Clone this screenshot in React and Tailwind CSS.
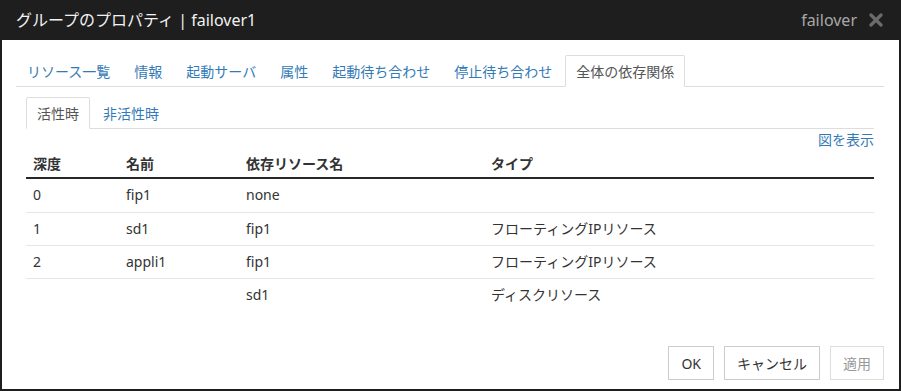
import React from "react";

const font = { fontFamily: '"Segoe UI", "Noto Sans", "Noto Sans CJK JP", sans-serif' };

const tabs = ["リソース一覧", "情報", "起動サーバ", "属性", "起動待ち合わせ", "停止待ち合わせ", "全体の依存関係"];

const rows = [
  ["0", "fip1", "none", ""],
  ["1", "sd1", "fip1", "フローティングIPリソース"],
  ["2", "appli1", "fip1", "フローティングIPリソース"],
  ["", "", "sd1", "ディスクリソース"],
];

function Cols({ cells, className = "" }) {
  return (
    <div className={"flex " + className}>
      <div className="w-[93px] pl-[7px]">{cells[0]}</div>
      <div className="w-[120px] pl-[7px]">{cells[1]}</div>
      <div className="w-[245px] pl-[7px]">{cells[2]}</div>
      <div className="flex-1 pl-[7px]">{cells[3]}</div>
    </div>
  );
}

export default function App() {
  return (
    <div style={font} className="w-[901px] h-[391px] bg-[#1e1e1e] flex flex-col px-[2px] pb-[2px]">
      <div className="h-[40px] flex items-center justify-between pl-[14px] pr-[16px] shrink-0">
        <div className="text-[16px] text-[#f2f2f2]">グループのプロパティ | failover1</div>
        <div className="flex items-center gap-[12px]">
          <span className="text-[16px] text-[#a8a8a8]">failover</span>
          <svg width="14" height="14" viewBox="0 0 14 14">
            <path d="M2 2 L12 12 M12 2 L2 12" stroke="#6b6b6b" strokeWidth="3.2" strokeLinecap="round" />
          </svg>
        </div>
      </div>
      <div className="flex-1 bg-white flex flex-col pt-[15px] pl-[14px] pr-[15px] pb-[9px]">
        <div className="flex border-b border-[#dddddd] h-[32px]">
          {tabs.map((t, i) => {
            const active = i === tabs.length - 1;
            return (
              <div
                key={t}
                className={
                  "-mb-px mr-[2px] h-[32px] px-[10px] flex items-center text-[14px] border rounded-t-[2px] " +
                  (active
                    ? "border-[#dddddd] border-b-white text-[#555555] bg-white"
                    : "border-transparent text-[#337ab7]")
                }
              >
                {t}
              </div>
            );
          })}
        </div>
        <div className="px-[10px] pt-[10px] flex flex-col flex-1">
          <div className="flex border-b border-[#dddddd] h-[32px]">
            {["活性時", "非活性時"].map((t, i) => (
              <div
                key={t}
                className={
                  "-mb-px mr-[2px] h-[32px] px-[10px] flex items-center text-[14px] border rounded-t-[2px] " +
                  (i === 0
                    ? "border-[#dddddd] border-b-white text-[#555555] bg-white"
                    : "border-transparent text-[#337ab7]")
                }
              >
                {t}
              </div>
            ))}
          </div>
          <div className="h-[20px] flex items-center justify-end text-[14px] text-[#337ab7]">図を表示</div>
          <div className="text-[14px] text-[#333333]">
            <Cols
              cells={["深度", "名前", "依存リソース名", "タイプ"]}
              className="h-[30px] items-center pt-[1px] font-bold border-b-2 border-[#262626]"
            />
            {rows.map((r, i) => (
              <Cols
                key={i}
                cells={r}
                className={"h-[33px] items-center pb-[2px] " + (i > 0 ? "border-t border-[#e6e6e6]" : "")}
              />
            ))}
          </div>
          <div className="mt-auto flex justify-end gap-[10px] -mr-[10px]">
            <button className="h-[34px] px-[12px] border border-[#cccccc] text-[14px] text-[#333333] bg-white">OK</button>
            <button className="h-[34px] px-[12px] border border-[#cccccc] text-[14px] text-[#333333] bg-white">キャンセル</button>
            <button className="h-[34px] px-[12px] border border-[#dddddd] text-[14px] text-[#999999] bg-white">適用</button>
          </div>
        </div>
      </div>
    </div>
  );
}
